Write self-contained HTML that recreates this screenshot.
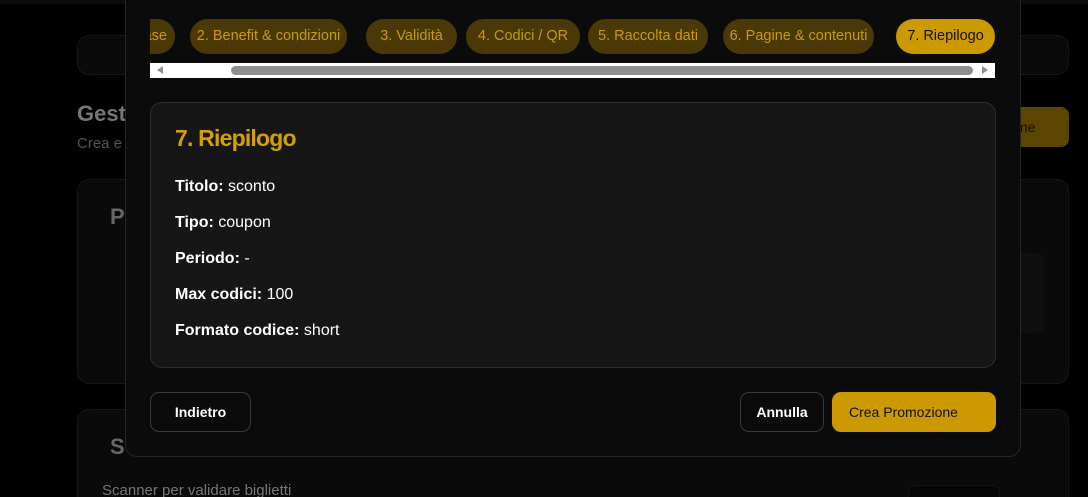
<!DOCTYPE html>
<html><head><meta charset="utf-8"><style>
*{box-sizing:border-box;margin:0;padding:0}
html{width:1088px;height:497px;overflow:hidden;background:#000}
body{width:1088px;height:497px;background:#000;font-family:"Liberation Sans",sans-serif;position:relative;overflow:hidden}
.a{position:absolute}
.card{position:absolute;background:#0a0a0a;border:1px solid #161616;border-radius:12px}
.modal{position:absolute;left:125px;top:-20px;width:896px;height:477px;background:#0b0b0b;border:1px solid #262626;border-radius:12px}
.tabs{position:absolute;left:150px;top:19px;width:845px;height:35px;overflow:hidden}
.pill{position:absolute;top:0;height:35px;border-radius:18px;background:#4a3806;color:#c99a10;font-size:14.5px;line-height:35px;text-align:center;white-space:nowrap}
.sum{position:absolute;left:150px;top:102px;width:846px;height:266px;background:#161616;border:1px solid #2e2e2e;border-radius:12px}
.row{position:absolute;left:24px;color:#fff;font-size:16px}
.row b{font-weight:bold}
.btn{position:absolute;top:392px;height:40px;border:1px solid #3a3a3a;border-radius:9px;color:#fff;font-size:14px;font-weight:bold;line-height:38px;text-align:center;background:#0b0b0b}
</style></head><body>
<div class="a" style="left:0;top:0;width:1088px;height:4px;background:#0c0c0c"></div>
<div class="card" style="left:77px;top:35px;width:992px;height:40px"></div>
<div class="a" style="left:77px;top:101px;color:#777;font-size:22px;font-weight:bold">Gest</div>
<div class="a" style="left:77px;top:135px;color:#555;font-size:15px">Crea e</div>
<div class="a" style="left:1000px;top:107px;width:69px;height:40px;background:#5c4500;border-radius:8px;color:#111;font-size:14px;line-height:40px;padding-left:2px">zione</div>
<div class="card" style="left:77px;top:179px;width:992px;height:205px"></div>
<div class="a" style="left:110px;top:204px;color:#666;font-size:22px;font-weight:bold">P</div>
<div class="a" style="left:1000px;top:253px;width:44px;height:80px;background:#0f0f0f;border-radius:8px"></div>
<div class="card" style="left:77px;top:409px;width:992px;height:88px;border-bottom:none;border-radius:12px 12px 0 0"></div>
<div class="a" style="left:110px;top:434px;color:#666;font-size:22px;font-weight:bold">S</div>
<div class="a" style="left:102px;top:482px;color:#777;font-size:15px;height:15px;overflow:hidden;line-height:18px">Scanner per validare biglietti</div>
<div class="a" style="left:908px;top:485px;width:92px;height:12px;background:#050505;border:1px solid #141414;border-bottom:none;border-radius:8px 8px 0 0"></div>

<div class="modal"></div>
<div class="tabs">
 <div class="pill" style="left:-60px;width:85px;text-align:right;padding-right:8px">Fase</div>
 <div class="pill" style="left:40px;width:157px">2. Benefit &amp; condizioni</div>
 <div class="pill" style="left:216px;width:91px">3. Validità</div>
 <div class="pill" style="left:316px;width:114px">4. Codici / QR</div>
 <div class="pill" style="left:438px;width:120px">5. Raccolta dati</div>
 <div class="pill" style="left:573px;width:151px">6. Pagine &amp; contenuti</div>
 <div class="pill" style="left:746px;width:99px;background:#cc9900;color:#111">7. Riepilogo</div>
</div>
<div class="a" style="left:150px;top:63px;width:845px;height:15px;background:#fff"></div>
<div class="a" style="left:231px;top:66px;width:742px;height:9px;background:#8e8e8e;border-radius:5px"></div>
<div class="a" style="left:157px;top:66px;width:0;height:0;border-top:4px solid transparent;border-bottom:4px solid transparent;border-right:6px solid #8e8e8e"></div>
<div class="a" style="left:982px;top:66px;width:0;height:0;border-top:4px solid transparent;border-bottom:4px solid transparent;border-left:6px solid #8e8e8e"></div>

<div class="sum">
 <div class="a" style="left:24px;top:22px;color:#d49f00;font-size:23px;font-weight:bold;letter-spacing:-0.8px">7. Riepilogo</div>
 <div class="row" style="top:75px"><b>Titolo:</b> sconto</div>
 <div class="row" style="top:111px"><b>Tipo:</b> coupon</div>
 <div class="row" style="top:147px"><b>Periodo:</b> -</div>
 <div class="row" style="top:183px"><b>Max codici:</b> 100</div>
 <div class="row" style="top:219px"><b>Formato codice:</b> short</div>
</div>
<div class="btn" style="left:150px;width:101px">Indietro</div>
<div class="btn" style="left:740px;width:84px">Annulla</div>
<div class="btn" style="left:832px;width:164px;background:#cc9900;border-color:#cc9900;color:#111;font-weight:normal;text-align:left;padding-left:16px">Crea Promozione</div>
</body></html>
